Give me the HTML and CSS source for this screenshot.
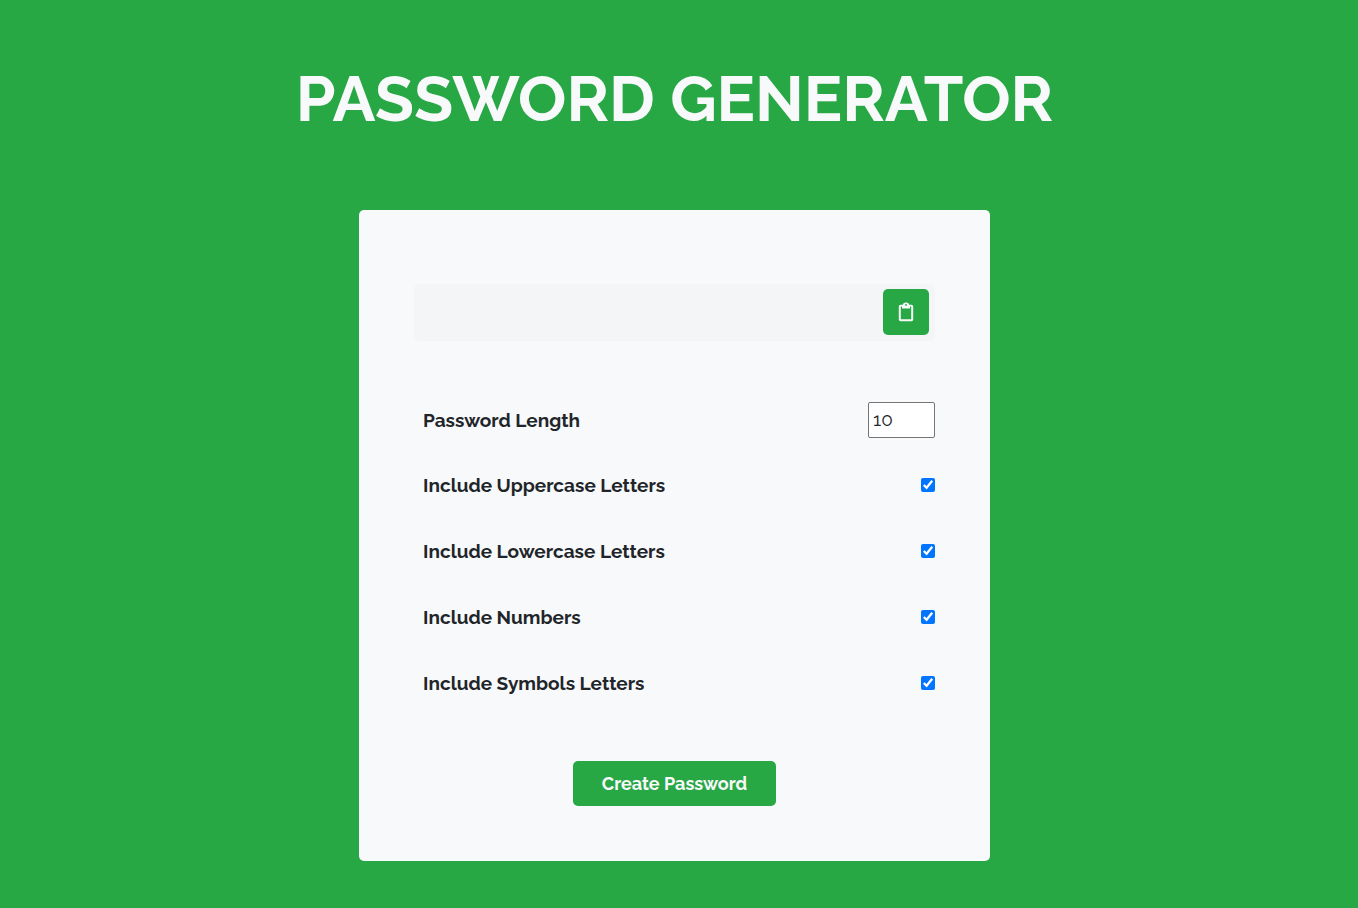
FILE: index.html
```html
<!DOCTYPE html>
<html lang="en">
<head>
<meta charset="utf-8">
<meta name="viewport" content="width=device-width, initial-scale=1">
<title>Password Generator</title>
<link rel="stylesheet" href="styles.css">
</head>
<body>
<main class="page">
  <h1 class="title">PASSWORD GENERATOR</h1>
  <form class="card">
    <div class="result">
      <output class="result-text" aria-label="Generated password"></output>
      <button class="copy" type="button" aria-label="Copy password">
        <svg class="copy-icon" viewBox="0 0 16 20" aria-hidden="true">
          <path fill="currentColor" fill-rule="evenodd" d="M2.500 2.700H4.800C5.300 1.500 6.200 .6 8 .6S10.700 1.500 11.200 2.700H13.500Q15.200 2.700 15.200 4.400V17.500Q15.200 19.200 13.500 19.200H2.500Q.8 19.200 .8 17.500V4.400Q.8 2.700 2.500 2.700ZM2.800 4.500V17.200H13.200V4.500H12V6.600H4V4.500ZM8 2A.9.9 0 1 0 8 3.800A.9.9 0 1 0 8 2Z"/>
        </svg>
      </button>
    </div>
    <div class="settings">
      <div class="row row-length"><label for="length">Password Length</label><input class="length" id="length" type="number" min="4" max="20" value="10"></div>
      <div class="row"><label for="upper">Include Uppercase Letters</label><input class="check" id="upper" type="checkbox" checked></div>
      <div class="row"><label for="lower">Include Lowercase Letters</label><input class="check" id="lower" type="checkbox" checked></div>
      <div class="row"><label for="numbers">Include Numbers</label><input class="check" id="numbers" type="checkbox" checked></div>
      <div class="row"><label for="symbols">Include Symbols Letters</label><input class="check" id="symbols" type="checkbox" checked></div>
    </div>
    <button class="create" type="button">Create Password</button>
  </form>
</main>
</body>
</html>
```
FILE: styles.css
```css
* { box-sizing: border-box; }

body {
  margin: 0;
  background: #28a745;
  color: #212529;
  font-family: Raleway, Lato, sans-serif;
  font-size: 19px;
}

.page {
  display: flex;
  flex-direction: column;
  align-items: center;
  padding: 60px 25px 47px 16px;
}

.title {
  margin: 0 0 72px;
  color: #f8f9fa;
  font-size: 64px;
  line-height: 78px;
  font-weight: 700;
  text-align: center;
}

.card {
  display: flex;
  flex-direction: column;
  align-items: center;
  width: 100%;
  max-width: 631px;
  padding: 74px 55px 55px;
  border-radius: 5px;
  background: #f8f9fb;
}

.result {
  display: flex;
  align-items: center;
  justify-content: space-between;
  width: 100%;
  min-height: 57px;
  padding: 5px 6px 6px;
  border-radius: 5px;
  background: #f4f5f7;
}

.copy,
.create {
  border: 0;
  border-radius: 5px;
  background: #28a745;
  color: #f8f9fa;
  cursor: pointer;
}

.copy {
  display: grid;
  place-items: center;
  width: 46px;
  height: 46px;
  padding: 0;
}

.copy-icon {
  width: 16px;
  height: 20px;
}

.settings {
  width: 100%;
  margin-top: 47px;
  padding-left: 9px;
}

.row {
  display: flex;
  align-items: center;
  justify-content: space-between;
  min-height: 66px;
  font-weight: 700;
  line-height: 24px;
}

.row-length { min-height: 64px; }

.length {
  width: 67px;
  height: 36px;
  padding: 0 4px 2px;
  border: 1px solid #767676;
  border-radius: 2px;
  background: #fff;
  color: #212529;
  font: inherit;
  font-weight: 400;
  appearance: textfield;
}

.check {
  width: 14px;
  height: 14px;
  margin: 0;
  accent-color: #0075ff;
}

.create {
  min-width: 203px;
  margin-top: 45px;
  padding: 10px 27px;
  font: inherit;
  font-size: 18px;
  line-height: 25px;
  font-weight: 700;
}
```
